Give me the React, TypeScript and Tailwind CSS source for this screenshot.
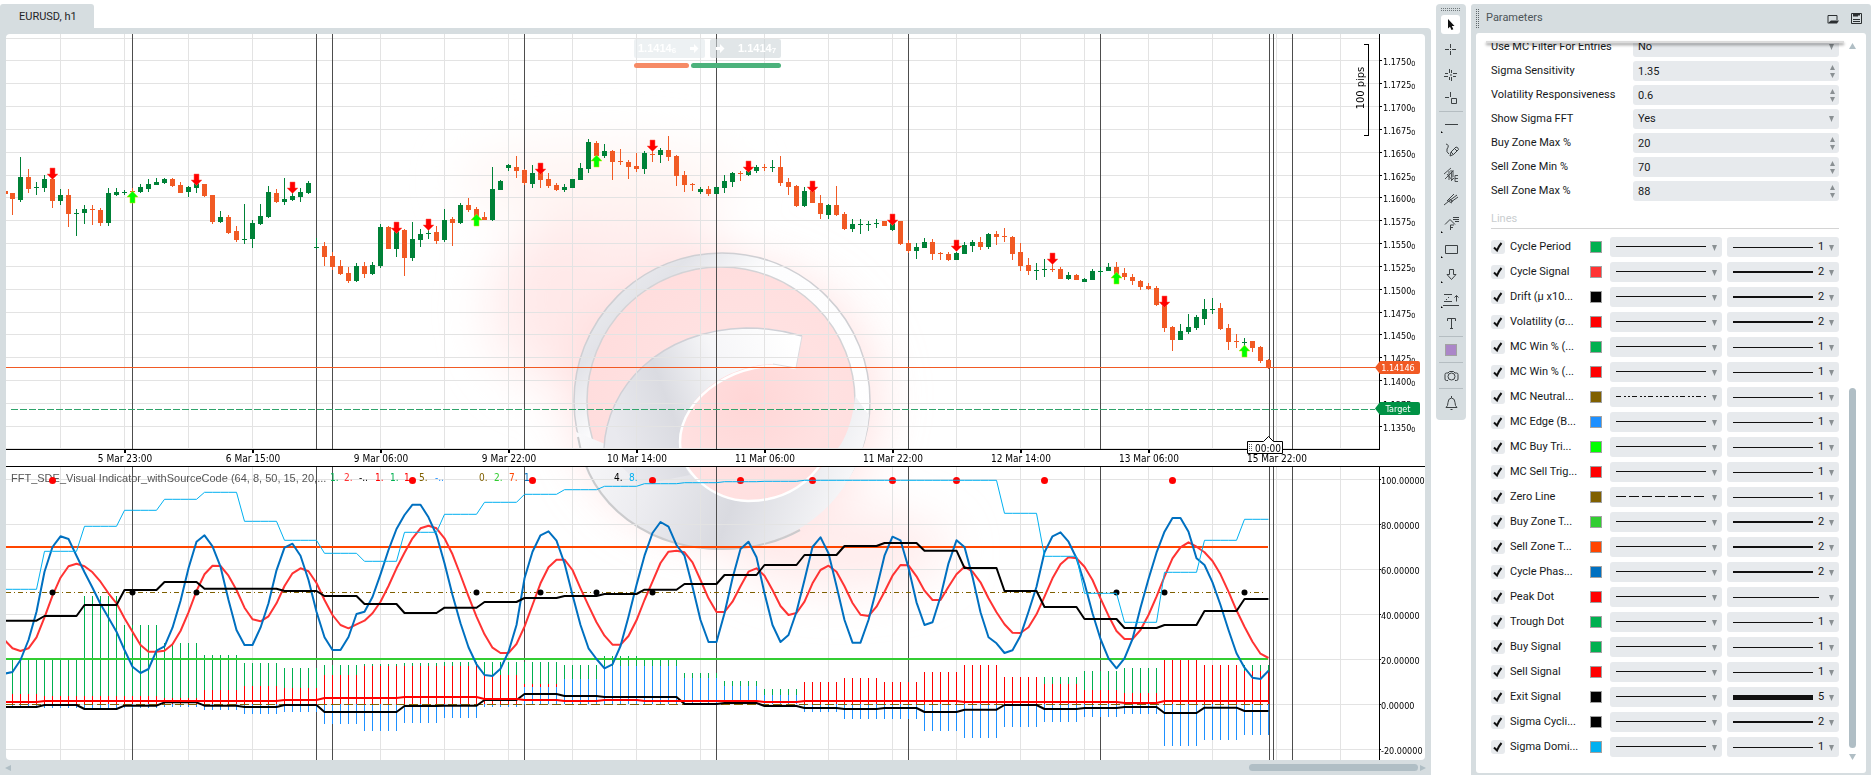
import { useId, useState, type ReactNode } from 'react'
import clsx from 'clsx'

// cTrader style workspace: price chart on top, FFT indicator below,
// drawing toolbar and the indicator parameter panel on the right.

// ---- chart data -----------------------------------------------------------

// one hourly bar: [rising, high, body top, body bottom, low], y in chart units
type Bar = [0 | 1, number, number, number, number]

const BAR_W = 8
const FIRST_X = 12
const barX = (i: number) => FIRST_X + i * BAR_W

const bars: Bar[] = [
  [0, 193, 193, 199, 215], [1, 157, 177, 200, 202], [0, 169, 177, 189, 193], [1, 182, 187, 188, 195],
  [1, 175, 179, 188, 192], [0, 179, 179, 201, 208], [1, 189, 195, 201, 205], [0, 189, 195, 214, 227],
  [1, 209, 213, 214, 236], [1, 205, 209, 213, 224], [0, 205, 209, 210, 225], [0, 208, 210, 223, 226],
  [1, 188, 193, 223, 226], [1, 188, 192, 195, 196], [1, 190, 192, 193, 195], [0, 188, 191, 192, 192],
  [1, 184, 187, 192, 193], [1, 179, 184, 189, 192], [1, 178, 182, 185, 185], [1, 178, 179, 183, 184],
  [0, 178, 179, 186, 187], [0, 182, 185, 193, 193], [1, 186, 187, 192, 197], [1, 180, 183, 188, 193],
  [0, 184, 184, 196, 197], [0, 195, 195, 222, 224], [1, 211, 217, 222, 223], [0, 215, 217, 233, 234],
  [0, 226, 231, 240, 242], [1, 204, 239, 240, 244], [1, 220, 223, 239, 248], [1, 204, 216, 224, 225],
  [1, 186, 192, 217, 218], [0, 189, 193, 202, 203], [1, 178, 199, 202, 205], [1, 190, 196, 200, 201],
  [1, 188, 192, 197, 202], [1, 181, 183, 193, 194], [1, 238, 247, 248, 249], [0, 242, 246, 257, 266],
  [0, 252, 256, 267, 270], [0, 260, 266, 274, 275], [0, 267, 273, 281, 283], [1, 263, 266, 281, 282],
  [0, 262, 266, 274, 278], [1, 262, 265, 274, 275], [1, 224, 227, 266, 268], [0, 226, 227, 249, 249],
  [1, 228, 230, 249, 257], [0, 229, 230, 258, 276], [1, 222, 239, 258, 261], [1, 229, 234, 240, 247],
  [1, 228, 233, 234, 239], [0, 226, 232, 241, 244], [1, 209, 220, 240, 242], [0, 217, 219, 223, 246],
  [1, 203, 205, 223, 224], [0, 198, 205, 210, 212], [0, 207, 209, 218, 218], [0, 212, 217, 220, 220],
  [1, 167, 189, 220, 221], [1, 180, 181, 190, 190], [1, 164, 165, 168, 171], [0, 156, 167, 171, 178],
  [0, 169, 170, 183, 185], [1, 165, 173, 184, 188], [0, 172, 172, 180, 188], [0, 173, 179, 186, 188],
  [0, 183, 185, 190, 191], [1, 184, 187, 190, 192], [1, 179, 179, 188, 188], [1, 163, 168, 180, 180],
  [1, 139, 142, 169, 173], [0, 141, 143, 156, 156], [1, 144, 151, 156, 158], [0, 150, 151, 162, 180],
  [0, 149, 161, 162, 165], [0, 160, 162, 167, 179], [0, 153, 166, 169, 172], [1, 151, 153, 169, 174],
  [0, 151, 154, 155, 162], [1, 148, 150, 155, 163], [0, 136, 150, 157, 161], [0, 155, 156, 176, 186],
  [0, 171, 175, 185, 192], [0, 183, 184, 185, 191], [1, 187, 189, 192, 194], [0, 186, 189, 194, 196],
  [1, 187, 187, 194, 194], [1, 175, 181, 188, 193], [1, 172, 173, 182, 187], [0, 171, 173, 174, 181],
  [1, 168, 171, 175, 176], [1, 165, 167, 171, 173], [0, 164, 167, 168, 171], [1, 160, 167, 168, 172],
  [0, 156, 167, 183, 186], [0, 178, 182, 187, 195], [0, 185, 186, 206, 207], [1, 187, 191, 206, 207],
  [0, 191, 191, 203, 203], [0, 195, 203, 214, 219], [1, 204, 205, 215, 219], [0, 186, 205, 215, 216],
  [0, 212, 214, 229, 230], [1, 219, 224, 229, 232], [1, 219, 224, 225, 234], [1, 221, 224, 225, 231],
  [1, 219, 223, 224, 228], [0, 221, 221, 226, 226], [1, 221, 222, 230, 231], [0, 221, 221, 244, 245],
  [0, 240, 243, 251, 253], [1, 243, 247, 251, 259], [1, 238, 242, 248, 248], [0, 239, 242, 254, 260],
  [0, 252, 253, 254, 260], [0, 252, 254, 260, 261], [1, 252, 253, 260, 260], [1, 242, 245, 254, 254],
  [1, 240, 242, 246, 252], [0, 237, 242, 247, 250], [1, 233, 234, 247, 249], [0, 231, 234, 237, 245],
  [0, 228, 236, 237, 242], [0, 236, 237, 254, 260], [0, 243, 252, 266, 271], [0, 258, 265, 271, 275],
  [1, 263, 270, 271, 280], [1, 259, 269, 270, 277], [0, 263, 269, 270, 272], [0, 267, 269, 279, 279],
  [1, 272, 275, 279, 280], [0, 274, 275, 280, 280], [1, 278, 279, 282, 282], [1, 269, 271, 280, 280],
  [1, 267, 271, 272, 276], [1, 263, 267, 271, 271], [0, 262, 267, 274, 274], [0, 268, 273, 277, 280],
  [0, 274, 277, 281, 285], [0, 280, 281, 287, 290], [0, 283, 286, 289, 290], [0, 286, 288, 305, 306],
  [0, 303, 305, 328, 332], [0, 326, 327, 340, 351], [1, 324, 331, 340, 340], [1, 314, 327, 332, 334],
  [1, 315, 317, 328, 330], [1, 299, 309, 319, 325], [1, 298, 309, 310, 314], [0, 303, 308, 329, 330],
  [0, 324, 328, 342, 350], [0, 334, 341, 342, 348], [1, 338, 342, 343, 346], [0, 341, 341, 348, 352],
  [0, 346, 347, 361, 363], [0, 359, 360, 368, 369],
]

const sellArrows = [
  [52, 168], [196, 174], [292, 182], [396, 222], [428, 219], [540, 163], [652, 140],
  [748, 161], [812, 181], [892, 214], [956, 240], [1052, 253], [1164, 296],
]
const buyArrows = [[132, 191], [476, 214], [596, 155], [1116, 272], [1244, 345]]

// indicator series are kept in thirds of a pixel below y = 385, first bar is -1
const indY = (v: number) => 385 + v / 3

const phase = [
  866, 861, 825, 765, 680, 560, 486, 454, 462, 512, 562, 608, 657, 698, 740, 795, 845, 864, 852, 797, 784, 728,
  648, 550, 470, 451, 484, 545, 645, 735, 780, 780, 728, 655, 556, 488, 476, 512, 585, 680, 757, 795, 795, 756,
  687, 680, 636, 568, 495, 432, 390, 359, 359, 397, 450, 535, 630, 715, 787, 838, 870, 873, 851, 800, 720, 580,
  500, 451, 439, 467, 535, 630, 720, 790, 822, 850, 838, 783, 695, 600, 512, 444, 411, 425, 480, 512, 605, 705,
  771, 771, 685, 580, 492, 470, 517, 625, 720, 771, 750, 680, 585, 486, 457, 505, 603, 705, 773, 773, 705, 612,
  512, 455, 466, 548, 652, 720, 712, 635, 535, 466, 486, 575, 682, 757, 775, 804, 796, 752, 680, 605, 502, 454,
  442, 470, 520, 595, 685, 762, 820, 850, 820, 762, 668, 582, 503, 440, 399, 399, 440, 520, 540, 592, 660, 735,
  805, 848, 878, 882, 857,
]

const signal = [
  765, 790, 798, 790, 757, 697, 632, 578, 544, 536, 544, 562, 590, 625, 655, 700, 740, 780, 800, 800, 797, 778,
  738, 682, 618, 568, 542, 543, 572, 615, 668, 703, 709, 694, 655, 603, 565, 550, 559, 594, 645, 690, 720, 730,
  718, 707, 685, 650, 603, 550, 503, 460, 430, 422, 430, 460, 508, 570, 634, 695, 748, 788, 804, 804, 777, 725,
  660, 595, 547, 524, 524, 555, 610, 662, 712, 752, 779, 779, 753, 706, 645, 590, 534, 500, 497, 502, 532, 585,
  640, 681, 681, 650, 604, 560, 550, 572, 615, 663, 690, 684, 650, 595, 555, 542, 560, 604, 654, 689, 693, 665,
  620, 572, 540, 541, 574, 617, 645, 645, 605, 568, 545, 560, 592, 640, 682, 718, 743, 744, 727, 688, 635, 580,
  538, 517, 520, 545, 585, 640, 692, 738, 762, 762, 735, 690, 635, 575, 520, 487, 472, 485, 502, 528, 568, 620,
  676, 725, 770, 806, 819,
]

// the slower outputs are recalculated every five bars
const dominance = [
  613, 499, 424, 376, 343, 322, 409, 466, 505, 529, 442, 388, 352, 328, 314, 304, 296, 293, 290, 289, 286, 286,
  286, 286, 286, 385, 514, 625, 712, 562, 466, 403,
]
const sigma = [
  707, 693, 660, 615, 591, 611, 611, 618, 633, 657, 684, 668, 651, 639, 633, 627, 614, 597, 570, 540, 510, 483,
  474, 497, 549, 618, 666, 702, 729, 720, 678, 642,
]
const drift = [
  966, 960, 972, 962, 952, 962, 966, 960, 981, 981, 963, 962, 945, 927, 933, 936, 936, 957, 954, 963, 969, 972,
  969, 981, 974, 960, 972, 969, 966, 984, 968, 978,
]
const volatility = [
  951, 948, 948, 948, 948, 948, 948, 945, 939, 939, 936, 936, 942, 945, 948, 945, 948, 948, 948, 951, 948, 948,
  948, 948, 951, 951, 951, 951, 954, 948, 948, 948,
]

const ZERO = 958
// [win % top, loss % top, edge end]
const histogram = [
  [826, 927, 968], [824, 934, 968], [633, 934, 972], [720, 934, 970], [774, 940, 966], [810, 915, 974],
  [834, 904, 986], [849, 909, 981], [840, 870, 1017], [837, 843, 1038], [834, 843, 1014], [831, 843, 998],
  [831, 870, 965], [831, 897, 906], [840, ZERO, 882], [814, ZERO, 843], [824, ZERO, 843], [864, ZERO, 880],
  [888, ZERO, 903], [912, ZERO, 930], [ZERO, 891, 980], [ZERO, 879, 1001], [ZERO, 891, 1001], [ZERO, 861, 1037],
  [ZERO, 840, 1058], [ZERO, 876, 1025], [876, 897, 1010], [858, 915, 995], [849, 924, 987], [ZERO, 825, 1082],
  [ZERO, 840, 1064], [840, 858, 1049],
]

const peakDots = [52, 412, 532, 652, 740, 812, 892, 956, 1044, 1172]
const exitDots = [52, 132, 196, 476, 540, 596, 652, 1116, 1164, 1244]

const gridX = Array.from({ length: 21 }, (_, i) => 60 + i * 64)
const priceGrid = [38, 60, 83, 106, 129, 152, 175, 197, 220, 243, 266, 289, 312, 334, 357, 380, 403, 426, 448]
const indGrid = [479, 524, 569, 614, 659, 704, 749]
const sessions = [132, 316, 332, 524, 716, 908, 1100, 1269, 1273, 1292]

const prices = [
  '1.1750', '1.1725', '1.1700', '1.1675', '1.1650', '1.1625', '1.1600', '1.1575', '1.1550', '1.1525', '1.1500',
  '1.1475', '1.1450', '1.1425', '1.1400', '1.1375', '1.1350',
]
const times = [
  '5 Mar 23:00', '6 Mar 15:00', '9 Mar 06:00', '9 Mar 22:00', '10 Mar 14:00', '11 Mar 06:00', '11 Mar 22:00',
  '12 Mar 14:00', '13 Mar 06:00', '15 Mar 22:00',
]
const levels = ['100.00000', '80.00000', '60.00000', '40.00000', '20.00000', '0.00000', '-20.00000']

const readouts: [number, string, string][] = [
  [330, '1.', '#00b050'], [344, '2.', '#ff3333'], [359, '-..', '#000000'], [375, '1.', '#ff0000'],
  [390, '1.', '#00b050'], [404, '1.', '#ff0000'], [419, '5.', '#806000'], [435, '-..', '#1e90ff'],
  [479, '0.', '#806000'], [494, '2.', '#32cd32'], [509, '7.', '#ff4500'], [524, '1.', '#0070c0'],
  [614, '4.', '#000000'], [629, '8.', '#00b0f0'],
]

const linePath = (values: number[]) =>
  values.map((v, i) => `${i ? 'L' : 'M'}${barX(i - 1) + 0.5} ${indY(v).toFixed(1)}`).join('')

const spread = (groups: number[]) => groups.flatMap((v) => [v, v, v, v, v]).slice(0, bars.length + 1)

// ---- chart ----------------------------------------------------------------

function Watermark() {
  return (
    <g>
      <defs>
        <filter id="glow" x="-50%" y="-50%" width="200%" height="200%">
          <feGaussianBlur stdDeviation="24" />
        </filter>
        <linearGradient id="ring" x1="0" y1="0" x2="1" y2="1">
          <stop offset="0" stopColor="#f3f3f6" />
          <stop offset="0.2" stopColor="#e2e3e8" />
          <stop offset="0.35" stopColor="#fdfdfe" />
          <stop offset="1" stopColor="#ffffff" />
        </linearGradient>
        <linearGradient id="letter" x1="0" y1="0.5" x2="1" y2="0.2">
          <stop offset="0" stopColor="#e9e9ee" />
          <stop offset="0.3" stopColor="#dadbe1" />
          <stop offset="0.6" stopColor="#f6f6f8" />
          <stop offset="1" stopColor="#ffffff" />
        </linearGradient>
        <linearGradient id="base" x1="0" y1="0" x2="1" y2="0.2">
          <stop offset="0" stopColor="#fbfbfc" />
          <stop offset="0.35" stopColor="#ececf0" />
          <stop offset="0.65" stopColor="#d9dae0" />
          <stop offset="1" stopColor="#f6f6f8" />
        </linearGradient>
        <radialGradient id="disc" cx="0.6" cy="0.5" r="0.6">
          <stop offset="0" stopColor="#ffd6d6" />
          <stop offset="0.5" stopColor="#ffe1e1" />
          <stop offset="1" stopColor="#ffdddd" />
        </radialGradient>
      </defs>
      <g filter="url(#glow)">
        <ellipse cx="620" cy="290" rx="110" ry="100" fill="#ffe6e6" opacity="0.7" />
        <ellipse cx="550" cy="310" rx="65" ry="80" fill="#ffe8e8" opacity="0.6" />
        <ellipse cx="600" cy="180" rx="140" ry="35" fill="#fff5f3" />
        <ellipse cx="725" cy="400" rx="155" ry="140" fill="#ffd0d0" opacity="0.6" />
        <ellipse cx="840" cy="550" rx="110" ry="40" fill="#ffe4e4" opacity="0.7" />
      </g>
      <circle cx="722" cy="401" r="148" fill="url(#ring)" stroke="#cfcfd3" strokeWidth="1.5" />
      <circle cx="721" cy="401" r="134" fill="url(#disc)" stroke="#d3d3d6" strokeWidth="1.5" />
      {/* lower crescent */}
      <path
        d="M576 432C584 505 646 549 722 549C800 549 862 495 869 415L855 396C853 418 848 432 841 444C816 478 790 501 748 501C712 499 680 472 680 438L605 444Z"
        fill="url(#base)"
      />
      <path d="M578 437C590 508 650 549 722 549C752 549 780 541 800 530" fill="none" stroke="#cbcbcd" strokeWidth="2" />
      <path
        d="M802 336C784 329 765 328 746 328C660 330 605 389 605 450L640 485L690 475C684 466 680 457 680 442C680 399 725 365 773 364L796 368Z"
        fill="url(#letter)"
      />
      <path d="M604 449C606 387 660 330 746 328Q775 328 802 336" fill="none" stroke="#cfd0d6" strokeWidth="1.5" />
      <path
        d="M796 368C740 356 680 396 680 442C680 472 712 500 748 501C790 501 812 478 822 462"
        fill="none"
        stroke="#ffffff"
        strokeWidth="2.5"
      />
      <path d="M773 364L796 368L802 336" fill="none" stroke="#dcdce0" />
    </g>
  )
}

function Arrow({ x, y, up }: { x: number; y: number; up?: boolean }) {
  return (
    <path
      d={
        up
          ? `M${x + 0.5} ${y}l5.5 6h-3v6h-5v-6h-3z`
          : `M${x + 0.5} ${y + 11.5}l5.5 -5.5h-3v-6h-5v6h-3z`
      }
      fill={up ? '#00ff00' : '#ff0000'}
      stroke={up ? '#c8e600' : '#ff6a5a'}
      strokeWidth="0.5"
    />
  )
}

function Chart() {
  return (
    <svg
      viewBox="6 34 1419 726"
      preserveAspectRatio="xMaxYMin slice"
      className="block h-full w-full"
      role="img"
      aria-label="EURUSD hourly chart"
    >
      <Watermark />

      <g shapeRendering="crispEdges">
        {gridX.map((x) => (
          <rect key={x} x={x} y={34} width={1} height={726} fill="#e3e3e3" />
        ))}
        {[...priceGrid, ...indGrid].map((y) => (
          <rect key={y} x={6} y={y} width={1373} height={1} fill="#e3e3e3" />
        ))}
        {sessions.map((x) => (
          <rect key={x} x={x} y={34} width={1} height={726} fill="#4d4d4d" />
        ))}

        {/* candles */}
        <rect x={6} y={191} width={2} height={3} fill="#f15a24" />
        {bars.map(([up, high, top, bottom, low], i) => (
          <g key={i} fill={up ? '#008137' : '#f15a24'}>
            <rect x={barX(i)} y={high} width={1} height={low - high} />
            <rect x={barX(i) - 2} y={top} width={5} height={bottom - top} />
          </g>
        ))}

        {/* current price and target */}
        <rect x={6} y={367} width={1373} height={1} fill="#f15a24" />
        <path d="M11 409.5H1375" stroke="#2fa36b" strokeDasharray="7 2" />

        {/* time axis */}
        <rect x={6} y={449} width={1373} height={17} fill="#ffffff" />
        <rect x={6} y={449} width={1374} height={1} fill="#000000" />
        <rect x={6} y={466} width={1419} height={1} fill="#000000" />
        {times.map((t, i) => (
          <rect key={t} x={124 + i * 128} y={450} width={2} height={3} fill="#000000" />
        ))}
        <rect x={1379} y={34} width={1} height={416} fill="#000000" />
        <rect x={1379} y={466} width={1} height={294} fill="#000000" />

        {/* histograms */}
        {histogram.map(([win, loss, edge], g) =>
          [0, 1, 2, 3, 4].map((n) => {
            const i = g * 5 + n - 1
            if (i < 0 || i >= bars.length) return null
            const x = barX(i)
            return (
              <g key={i}>
                <rect x={x} y={indY(win)} width={1} height={(ZERO - win) / 3} fill="#00b050" />
                <rect x={x} y={indY(loss)} width={1} height={(ZERO - loss) / 3} fill="#ff0000" />
                <rect
                  x={x}
                  y={indY(Math.min(edge, ZERO))}
                  width={1}
                  height={Math.abs(edge - ZERO) / 3}
                  fill="#1e90ff"
                />
              </g>
            )
          })
        )}

        {/* zones and levels */}
        <path d="M6 592.5H1266" stroke="#806000" strokeDasharray="5 3 1 3" />
        <path d="M6 704.5H1268" stroke="#806000" strokeDasharray="9 4" />
        <rect x={6} y={546} width={1262} height={2} fill="#ff4500" />
        <rect x={6} y={658} width={1262} height={2} fill="#32cd32" />
      </g>

      {sellArrows.map(([x, y]) => (
        <Arrow key={x} x={x} y={y} />
      ))}
      {buyArrows.map(([x, y]) => (
        <Arrow key={x} x={x} y={y} up />
      ))}

      <text x={11} y={482} className="fill-[#555] font-['Liberation_Sans'] text-[11px]">
        FFT_SDE_Visual Indicator_withSourceCode (64, 8, 50, 15, 20,...
      </text>
      <g className="font-['DejaVu_Sans_Condensed','DejaVu_Sans'] text-[10px]">
        {readouts.map(([x, label, color]) => (
          <text key={x} x={x} y={481} fill={color}>
            {label}
          </text>
        ))}
      </g>

      {/* indicator lines */}
      <g fill="none" strokeLinejoin="round">
        <path d={linePath(spread(drift))} stroke="#000000" strokeWidth={2} />
        <path d={linePath(spread(volatility))} stroke="#ff0000" strokeWidth={2} />
        <path d={linePath(signal)} stroke="#ff3333" strokeWidth={2} />
        <path d={linePath(phase)} stroke="#0070c0" strokeWidth={2} />
      </g>
      {peakDots.map((x) => (
        <circle key={x} cx={x + 0.5} cy={480.5} r={3.5} fill="#ff0000" />
      ))}
      {exitDots.map((x) => (
        <circle key={x} cx={x + 0.5} cy={592.5} r={3} fill="#000000" />
      ))}
      <g fill="none" strokeLinejoin="round">
        <path d={linePath(spread(sigma))} stroke="#000000" strokeWidth={2} />
        <path d={linePath(spread(dominance))} stroke="#00b0f0" strokeWidth={1} />
      </g>

      {/* axis labels */}
      <g className="fill-black font-['DejaVu_Sans_Condensed','DejaVu_Sans'] text-[9px]">
        {prices.map((p, i) => (
          <g key={p}>
            <rect x={1380} y={priceGrid[i + 1]} width={2} height={1} />
            <text x={1383} y={priceGrid[i + 1] + 5}>
              {p}
              <tspan dy={1} className="text-[7px]">0</tspan>
            </text>
          </g>
        ))}
        {levels.map((l, i) => (
          <g key={l}>
            <rect x={1380} y={indGrid[i]} width={1} height={1} />
            <text x={1381} y={indGrid[i] + 5}>{l}</text>
          </g>
        ))}
      </g>
      <g className="fill-black font-['DejaVu_Sans_Condensed','DejaVu_Sans'] text-[10px]" textAnchor="middle">
        {times.map((t, i) => (
          <text key={t} x={125 + i * 128} y={462}>{t}</text>
        ))}
        <text transform="translate(1364 88) rotate(-90)" className="text-[11px]">100 pips</text>
      </g>
      <path d="M1364 44.5h4.5v91h-4.5" fill="none" stroke="#000000" shapeRendering="crispEdges" />

      {/* price tags */}
      <path d="M1375 367.5l5 -6.5h38a2 2 0 0 1 2 2v9a2 2 0 0 1 -2 2h-38z" fill="#f15a24" />
      <path d="M1375 408.5l5 -6.5h38a2 2 0 0 1 2 2v9a2 2 0 0 1 -2 2h-38z" fill="#009245" />
      <g className="fill-white font-['DejaVu_Sans_Condensed','DejaVu_Sans'] text-[9px]" textAnchor="middle">
        <text x={1398} y={371}>1.14146</text>
        <text x={1398} y={412}>Target</text>
      </g>

      {/* bar countdown */}
      <path
        d="M1247.500 441.500h16l5 -5l5 5h9v12h-35z"
        fill="#ffffff"
        stroke="#000000"
        strokeLinejoin="round"
      />
      <path d="M1249.500 444v8M1251.500 444v8" stroke="#666666" strokeDasharray="1 1" />
      <text x={1255} y={452} className="fill-black font-['DejaVu_Sans_Condensed','DejaVu_Sans'] text-[10px]">
        00:00
      </text>

      {/* quick trade */}
      <rect x={634} y={39} width={71} height={19} rx={2} fill="#e3e9ec" opacity={0.65} />
      <rect x={710} y={39} width={71} height={19} rx={2} fill="#cdd6d9" opacity={0.6} />
      <g className="fill-white font-['Liberation_Sans'] text-[11px] font-bold">
        <text x={638} y={52}>1.1414<tspan dy={1} className="text-[8px]">6</tspan></text>
        <text x={738} y={52}>1.1414<tspan dy={1} className="text-[8px]">7</tspan></text>
        <path d="M690 47h4v-3l4.500 4.500l-4.500 4.500v-3h-4zM716 47h4v-3l4.500 4.500l-4.500 4.500v-3h-4z" />
      </g>
      <rect x={634} y={63} width={55} height={5} rx={2.5} fill="#f68b66" />
      <rect x={691} y={63} width={90} height={5} rx={2.5} fill="#4cb27c" />
    </svg>
  )
}

// ---- toolbar --------------------------------------------------------------

function Glyph({ children }: { children: ReactNode }) {
  return (
    <svg width="18" height="18" viewBox="0 0 18 18" fill="none" stroke="#3c4143" strokeWidth="1" aria-hidden="true">
      {children}
    </svg>
  )
}

const tools: { name: string; icon: ReactNode; menu?: boolean; rule?: boolean }[] = [
  { name: 'Crosshair', icon: <path d="M3 8.500h4M10 8.500h4M8.500 3v4M8.500 10v4M8 8.500h1" /> },
  {
    name: 'Synced crosshair',
    icon: <path d="M2 10.500h4M11 7.500h4M7.500 3v4M9.500 11v4M3 7.500h3M11 10.500h3M9.500 4v3M7.500 11v3M8 9h2" />,
  },
  { name: 'Measure', icon: <path d="M3 7.500h4M8.500 2v5M9.500 8.500h5v5h-5z" />, rule: true },
  { name: 'Trend line', icon: <path d="M3 8.500h13" />, menu: true },
  {
    name: 'Pencil',
    icon: <path d="M4 3q4 1 1 5q-1 3 2 5M8 15l1-4l5-5q2 0 2.500 2.500l-5 5zM9 11l2.500 2.500M12.500 7.500l2.500 2.500" />,
  },
  {
    name: 'Equidistant channel',
    icon: <path d="M2 8l7-6M3 13l8-8M5 8l5 6M7 5v9M9 4l1 10M11 4v7M9 15l3-3M16 9.500h-3v6h3M13 12.500h3" strokeWidth="0.9" />,
  },
  { name: 'Pitchfork', icon: <path d="M2 14l5-4M5 10l7-7M7 10l8-6M9 11l7-5M5 9.500l5 2.500M7 7.500l4 3" /> },
  {
    name: 'Fibonacci',
    icon: <path d="M3 8.500l5-5l5 5M11 1.500h6M11 3.500h6M13 5.500h4M8.500 14v-5h3.500M8.500 11.500h2.500" />,
    menu: true,
  },
  { name: 'Rectangle', icon: <path d="M3.500 4.500h12v8h-12z" />, menu: true },
  { name: 'Arrow', icon: <path d="M7.500 3.500h4v5h2.500l-4.500 5l-4.500-5h2.500z" />, menu: true },
  {
    name: 'Risk reward',
    icon: <path d="M2 3.500h8M2 10.500h8M1 14.500h16M14.500 10.500v-6M12.500 6.500l2-2l2 2M4 9l1-1M6 7l1-1" />,
    menu: true,
  },
  { name: 'Text', icon: <path d="M5.500 6v-2.500h8v2.500M9.500 3.500v10M8 13.500h3" />, rule: true },
]

function Toolbar() {
  return (
    <div role="toolbar" aria-label="Drawing tools" className="mt-1 flex w-[30px] shrink-0 flex-col self-start rounded-[4px] bg-[#d6dde0] pb-1">
      <div className="flex h-[11px] items-center justify-center">
        <svg width="20" height="4" viewBox="0 0 20 4" stroke="#6f777a" aria-hidden="true">
          <path d="M0 .5H20M0 2.500H20" strokeDasharray="1 1" />
        </svg>
      </div>
      <button aria-label="Pointer" className="mb-[3px] ml-[5px] flex h-[19px] w-[19px] items-center justify-center rounded-[3px] bg-white">
        <svg width="10" height="12" viewBox="0 0 10 12" fill="#111" aria-hidden="true">
          <path d="M2 0v9.500l2-1.800l1.500 3.300l1.800-.8l-1.500-3.200h2.700z" />
        </svg>
      </button>
      {tools.map(({ name, icon, menu, rule }) => (
        <button
          key={name}
          aria-label={name}
          className={clsx('relative mx-[3px] flex h-[25px] items-center justify-center', rule && 'border-b border-[#b5bdc1]')}
        >
          <Glyph>{icon}</Glyph>
          {menu && <span className="absolute bottom-1 left-[2px] border-[1px] border-transparent border-b-black border-l-black" />}
        </button>
      ))}
      <button aria-label="Drawing colour" className="mx-[3px] flex h-[26px] items-center justify-center border-b border-[#b5bdc1]">
        <span className="h-3 w-3 border border-[#a2a2a2] bg-[#ab86c8]" />
      </button>
      <button aria-label="Snapshot" className="mx-[3px] flex h-[26px] items-center justify-center border-b border-[#b5bdc1]">
        <Glyph>
          <circle cx="9.5" cy="9.5" r="3.500" />
          <path d="M6 13.500h-1.500q-1.500 0-1.500-1.500v-4.500q0-1.500 1.500-1.500h1.500l1.500-1.500h4l1.500 1.500h1.500q1.500 0 1.500 1.500v4.500q0 1.500-1.500 1.500h-1.500" />
        </Glyph>
      </button>
      <button aria-label="Alerts" className="mx-[3px] flex h-[27px] items-center justify-center">
        <Glyph>
          <path d="M4 13.500q2-1.500 2-5q0-4 3.500-4.500q3.500 .5 3.500 4.500q0 3.500 2 5zM9.500 2v2M8.500 15.500h2" />
        </Glyph>
      </button>
    </div>
  )
}

// ---- parameters -----------------------------------------------------------

const Down = ({ className }: { className?: string }) => (
  <svg width="5" height="6" viewBox="0 0 5 6" className={clsx('pointer-events-none', className)} aria-hidden="true">
    <path d="M0 0h5l-2.500 6z" fill="#8a9093" />
  </svg>
)

const inputs: { label: string; value: string; list?: boolean }[] = [
  { label: 'Use MC Filter For Entries', value: 'No', list: true },
  { label: 'Sigma Sensitivity', value: '1.35' },
  { label: 'Volatility Responsiveness', value: '0.6' },
  { label: 'Show Sigma FFT', value: 'Yes', list: true },
  { label: 'Buy Zone Max %', value: '20' },
  { label: 'Sell Zone Min %', value: '70' },
  { label: 'Sell Zone Max %', value: '88' },
]

type Line = { label: string; color: string; width?: number; dash?: string }

const lines: Line[] = [
  { label: 'Cycle Period', color: '#00b050', width: 1 },
  { label: 'Cycle Signal', color: '#ff3333', width: 2 },
  { label: 'Drift (µ x10...', color: '#000000', width: 2 },
  { label: 'Volatility (σ...', color: '#ff0000', width: 2 },
  { label: 'MC Win % (...', color: '#00b050', width: 1 },
  { label: 'MC Win % (...', color: '#ff0000', width: 1 },
  { label: 'MC Neutral...', color: '#806000', width: 1, dash: '5 3 2 2 2 2' },
  { label: 'MC Edge (B...', color: '#1e90ff', width: 1 },
  { label: 'MC Buy Tri...', color: '#00ff00', width: 1 },
  { label: 'MC Sell Trig...', color: '#ff0000', width: 1 },
  { label: 'Zero Line', color: '#806000', width: 1, dash: '10 3' },
  { label: 'Buy Zone T...', color: '#32cd32', width: 2 },
  { label: 'Sell Zone T...', color: '#ff4500', width: 2 },
  { label: 'Cycle Phas...', color: '#0070c0', width: 2 },
  { label: 'Peak Dot', color: '#ff0000' },
  { label: 'Trough Dot', color: '#00b050', width: 1 },
  { label: 'Buy Signal', color: '#00b050', width: 1 },
  { label: 'Sell Signal', color: '#ff0000', width: 1 },
  { label: 'Exit Signal', color: '#000000', width: 5 },
  { label: 'Sigma Cycli...', color: '#000000', width: 2 },
  { label: 'Sigma Domi...', color: '#00b0f0', width: 1 },
]

function InputRow({ label, value, list }: { label: string; value: string; list?: boolean }) {
  const id = useId()
  const [current, setCurrent] = useState(value)
  const field = 'h-5 w-full appearance-none rounded-[3px] bg-[#e7eaed] px-[5px] text-[11px] outline-none'
  return (
    <div className="flex items-center">
      <label htmlFor={id} className="w-[142px] shrink-0">{label}</label>
      <div className="relative flex-1">
        {list ? (
          <select id={id} className={field} value={current} onChange={(e) => setCurrent(e.target.value)}>
            <option>Yes</option>
            <option>No</option>
          </select>
        ) : (
          <input id={id} className={field} value={current} onChange={(e) => setCurrent(e.target.value)} />
        )}
        {list ? (
          <Down className="absolute top-[7px] right-[5px]" />
        ) : (
          <svg width="5" height="13" viewBox="0 0 5 13" className="absolute top-1 right-1" aria-hidden="true">
            <path d="M0 5h5l-2.500 -5zM0 8h5l-2.500 5z" fill="#8a9093" />
          </svg>
        )}
      </div>
    </div>
  )
}

function LineRow({ label, color, width, dash }: Line) {
  const id = useId()
  const [on, setOn] = useState(true)
  const select = 'h-5 w-full appearance-none rounded-[3px] bg-[#e7eaed] text-[11px] outline-none'
  const stroke = width ?? 1
  return (
    <div className="flex items-center">
      <span className="relative mr-[5px] h-[14px] w-[14px]">
        <input
          id={id}
          type="checkbox"
          checked={on}
          onChange={() => setOn(!on)}
          className="block h-[14px] w-[14px] appearance-none rounded-[3px] bg-[#e7eaed]"
        />
        {on && (
          <svg viewBox="0 0 14 14" className="pointer-events-none absolute inset-0" fill="none" stroke="#111" strokeWidth="2" aria-hidden="true">
            <path d="M3 7.500l3 3q1.500-4 4.500-7.500" />
          </svg>
        )}
      </span>
      <label htmlFor={id} className="w-20 shrink-0 whitespace-nowrap">{label}</label>
      <button aria-label={`${label} colour`} className="mr-2 h-3 w-3 shrink-0 border border-[#a2a2a2]" style={{ background: color }} />
      <div className="relative mr-[5px] flex-1">
        <select aria-label={`${label} style`} className={select}>
          <option value="line" />
        </select>
        <svg width="90" height="1" className="pointer-events-none absolute top-[9px] left-[6px]" stroke="#111" aria-hidden="true">
          <path d="M0 .5H90" strokeDasharray={dash} />
        </svg>
        <Down className="absolute top-[8px] right-[5px]" />
      </div>
      <div className="relative flex-1">
        <select aria-label={`${label} width`} className={clsx(select, 'pl-[91px]')}>
          <option>{width ?? ''}</option>
        </select>
        <span className="pointer-events-none absolute top-0 left-[6px] flex h-5 items-center">
          <svg width={width ? 80 : 86} height={stroke} stroke="#111" aria-hidden="true">
            <path d={`M0 ${stroke / 2}H86`} strokeWidth={stroke} />
          </svg>
        </span>
        <Down className="absolute top-[8px] right-[5px]" />
      </div>
    </div>
  )
}

function Parameters() {
  return (
    <aside className="mt-1 flex w-[400px] shrink-0 flex-col rounded-t-[3px] bg-[#d6dde0] px-[5px] pb-[2px] font-[Roboto,sans-serif] text-[11px] text-[#16191b]">
      <header className="flex h-[29px] shrink-0 items-center">
        <svg width="4" height="19" viewBox="0 0 4 19" stroke="#5f676a" aria-hidden="true">
          <path d="M.5 0V19M2.500 0V19" strokeDasharray="1 1" />
        </svg>
        <h2 className="ml-[6px] flex-1 text-[#4c5457]">Parameters</h2>
        <button aria-label="Open preset" className="mr-3">
          <svg width="12" height="10" viewBox="0 0 12 10" aria-hidden="true">
            <path d="M1 9V1.500h9V6" fill="none" stroke="#2b2f31" />
            <path d="M1 9L4 6.500H12L10 9.500H.5z" fill="#2b2f31" />
          </svg>
        </button>
        <button aria-label="Save preset" className="mr-1">
          <svg width="11" height="11" viewBox="0 0 11 11" fill="none" stroke="#2b2f31" aria-hidden="true">
            <path d="M.5 .5h10v10h-10zM2 6.500h7M2 8.500h7" />
            <path d="M2 2.500h5M2 1.500h7" strokeWidth="2" />
          </svg>
        </button>
      </header>
      <div className="flex min-h-0 flex-1 rounded-[3px] bg-white pt-2">
        <div className="flex min-w-0 flex-1 flex-col">
          <div className="relative z-10 ml-[10px] h-[2px] w-[358px] bg-[#dcdcdc] shadow-[0_2px_3px_rgba(0,0,0,0.45)]" />
          <div className="min-h-0 flex-1 overflow-hidden pl-[15px]">
            <div className="-mt-[6px] flex flex-col gap-1">
              {inputs.map((row) => (
                <InputRow key={row.label} {...row} />
              ))}
            </div>
            <h3 className="mt-[9px] mb-2 flex h-[19px] items-center border-b border-[#d4d4d4] text-[#c9cdcf]">Lines</h3>
            <div className="flex flex-col gap-[5px]">
              {lines.map((row, i) => (
                <LineRow key={i} {...row} />
              ))}
            </div>
          </div>
        </div>
        <div className="flex w-[27px] shrink-0 flex-col items-center pt-[2px] pb-[13px]">
          <svg width="7" height="6" viewBox="0 0 7 6" fill="#b0bec5" aria-hidden="true"><path d="M0 6h7l-3.500 -6z" /></svg>
          <div className="my-[6px] flex w-[7px] flex-1 flex-col justify-end">
            <div className="h-[52%] rounded-full bg-[#b0bec5]" />
          </div>
          <svg width="7" height="6" viewBox="0 0 7 6" fill="#b0bec5" aria-hidden="true"><path d="M0 0h7l-3.500 6z" /></svg>
        </div>
      </div>
    </aside>
  )
}

export default function App() {
  return (
    <div className="flex h-screen gap-[5px] overflow-hidden bg-white pr-[3px]">
      <main className="flex min-w-0 flex-1 flex-col pt-1">
        <div role="tablist" className="flex">
          <button role="tab" aria-selected="true" className="h-6 w-[94px] rounded-t-[3px] bg-[#d6dde0] pt-[2px] pl-[19px] text-left font-[Roboto,sans-serif] text-[11px] text-[#1f2426]">
            EURUSD, h1
          </button>
        </div>
        <div className="flex min-h-0 flex-1 flex-col rounded-tr-[4px] bg-[#d6dde0] px-[6px] pt-[6px]">
          <div className="min-h-0 flex-1 overflow-hidden rounded-[4px] bg-white">
            <Chart />
          </div>
          <div className="-mx-[1px] flex h-[15px] shrink-0 items-center">
            <svg width="6" height="6" viewBox="0 0 6 6" fill="#b0bec5" aria-hidden="true"><path d="M6 0v6l-6 -3z" /></svg>
            <div className="mx-[2px] flex flex-1 justify-end">
              <div className="h-[7px] w-[12%] rounded-full bg-[#b0bec5]" />
            </div>
            <svg width="6" height="6" viewBox="0 0 6 6" fill="#b0bec5" aria-hidden="true"><path d="M0 0v6l6 -3z" /></svg>
          </div>
        </div>
      </main>
      <Toolbar />
      <Parameters />
    </div>
  )
}
